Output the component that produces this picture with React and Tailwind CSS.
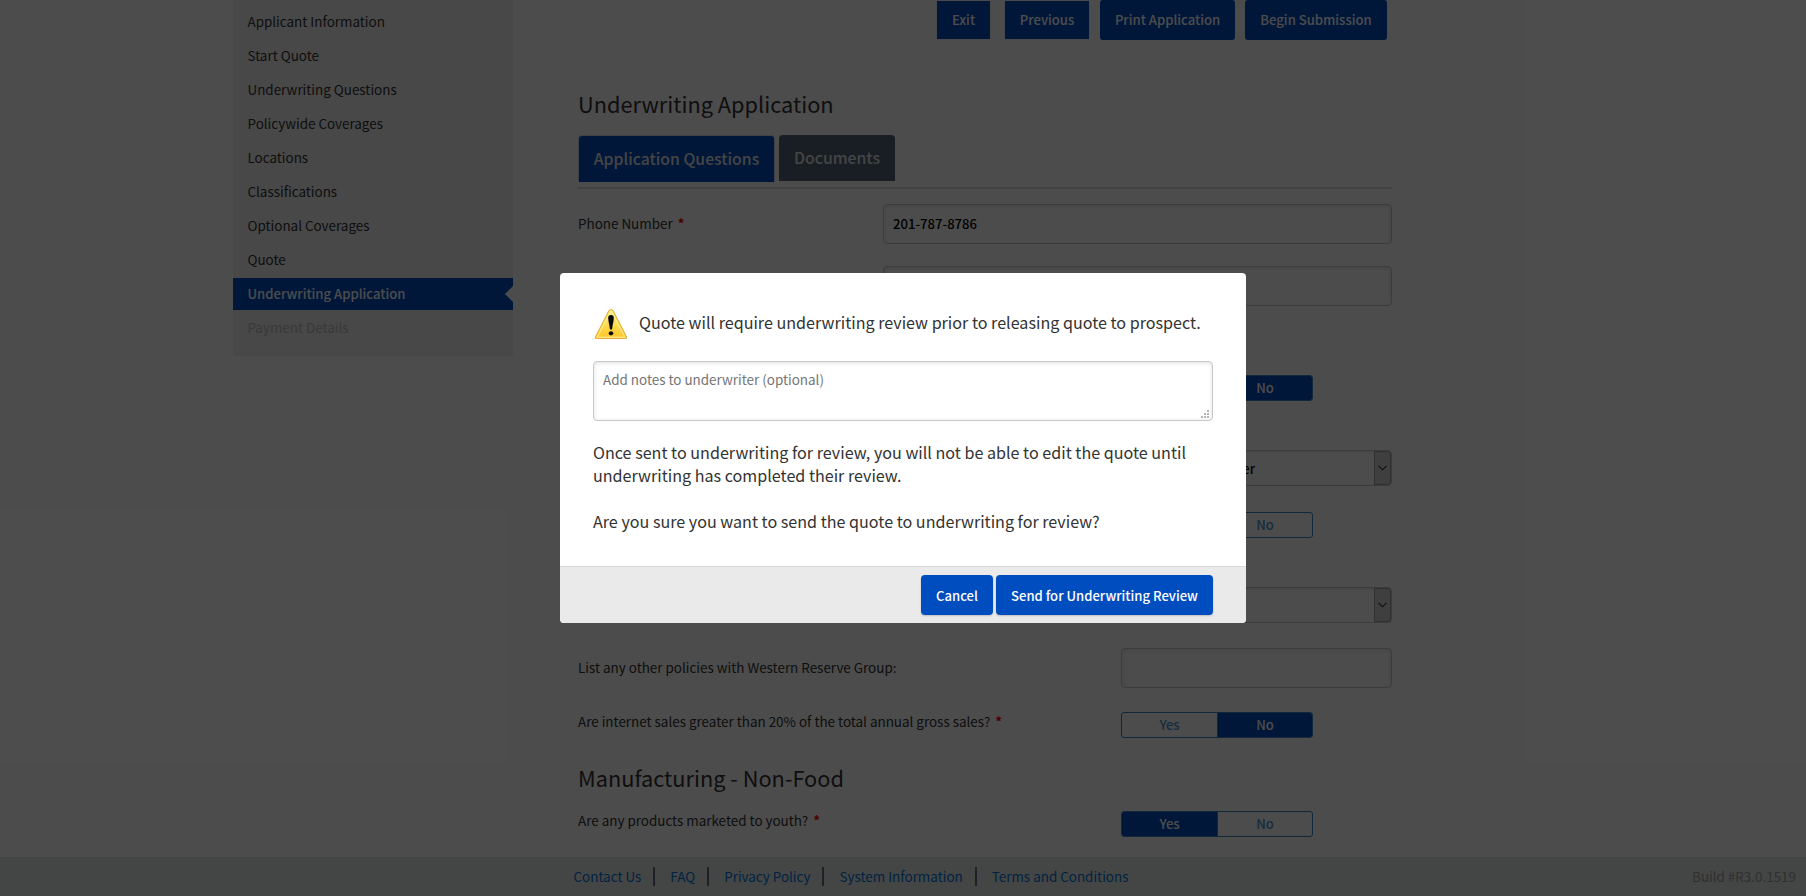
import clsx from "clsx";

const NAV_ITEMS = [
  "Applicant Information",
  "Start Quote",
  "Underwriting Questions",
  "Policywide Coverages",
  "Locations",
  "Classifications",
  "Optional Coverages",
  "Quote",
  "Underwriting Application",
  "Payment Details",
];

const FOOTER_LINKS = [
  "Contact Us",
  "FAQ",
  "Privacy Policy",
  "System Information",
  "Terms and Conditions",
];

function Sidebar() {
  return (
    <nav className="ml-[233px] h-[356px] w-[280px] shrink-0 bg-[#f1f1f1] pt-1.5">
      <ul className="flex flex-col gap-0.5">
        {NAV_ITEMS.map((item) => {
          const active = item === "Underwriting Application";
          return (
            <li
              key={item}
              className={clsx(
                "flex h-8 items-center justify-between pl-[14.5px]",
                active ? "bg-[#004dbf] text-[13.08px] font-medium" : "pb-0.5",
                item === "Payment Details" ? "text-[#bdbdbd]" : "text-[#333333]"
              )}
            >
              <span className={active ? "text-white" : undefined}>{item}</span>
              {active && (
                <svg className="h-4 w-2" viewBox="0 0 8 16">
                  <path d="M8 0 0 8l8 8z" fill="#fff" />
                </svg>
              )}
            </li>
          );
        })}
      </ul>
    </nav>
  );
}

function ActionButton({ children, className }) {
  return (
    <button
      className={clsx(
        "flex h-10 shrink-0 items-center justify-center whitespace-nowrap bg-[#004dbf] text-[13.08px] font-medium text-white",
        className
      )}
    >
      {children}
    </button>
  );
}

function Label({ children, required }) {
  return (
    <label className="text-[#333333]">
      {children}
      {required && <span className="ml-[5px] font-bold text-[#ff0000]">*</span>}
    </label>
  );
}

function Row({ children, className }) {
  return <div className={clsx("flex justify-between", className)}>{children}</div>;
}

function TextField({ value, className }) {
  return (
    <div
      className={clsx(
        "flex h-10 items-center rounded border border-[#c8c8c8] bg-white px-[9px] text-[13.1px] font-medium text-black shadow-[inset_0_1px_4px_rgba(0,0,0,0.12)]",
        className
      )}
    >
      {value}
    </div>
  );
}

function Toggle({ value, className }) {
  return (
    <div
      className={clsx(
        "mr-[79px] flex h-[26px] w-48 overflow-hidden rounded-[3px] border border-[#3a86c6] text-[13.05px] font-medium text-[#4f93ce]",
        className
      )}
    >
      {["Yes", "No"].map((option) => (
        <span
          key={option}
          className={clsx(
            "flex items-center justify-center",
            option === "Yes" ? "w-24 border-r border-[#3a86c6]" : "grow",
            option === value && "bg-[#004dbf]"
          )}
        >
          <span className={option === value ? "text-white" : undefined}>{option}</span>
        </span>
      ))}
    </div>
  );
}

function Select({ value }) {
  return (
    <div className="flex h-9 w-[271px] justify-between rounded border border-[#c8c8c8] font-medium text-black shadow-[inset_0_1px_3px_rgba(0,0,0,0.1)]">
      <span className="flex w-[133px] items-center justify-end pt-0.5 text-[13.05px]">{value}</span>
      <span className="flex w-[17px] items-center justify-center rounded-r-[3px] border border-[#a0a0a0] bg-[#d2d2d2]">
        <svg className="h-[6px] w-[9px]" viewBox="0 0 9 6" fill="none">
          <path d="M.5 .8l4 4 4-4" stroke="#303030" strokeWidth="1.1" />
        </svg>
      </span>
    </div>
  );
}

function Content() {
  return (
    <main className="ml-[65px] w-[814px]">
      <div className="flex h-10 justify-end pr-[5px]">
        <ActionButton className="mr-[13px] w-[55px] border border-[#f4f4f4] pb-px">Exit</ActionButton>
        <ActionButton className="mr-2.5 w-[86px] border border-[#f4f4f4] pb-px">Previous</ActionButton>
        <ActionButton className="mr-2.5 w-[135px] rounded-[3px] pb-px">Print Application</ActionButton>
        <ActionButton className="w-[142px] rounded-[3px] pb-px">Begin Submission</ActionButton>
      </div>

      <h1 className="mt-12 h-8 text-[21.75px] leading-8 text-[#333333]">Underwriting Application</h1>

      <div className="mt-[15px] flex h-[54px] items-start gap-1 border-b-2 border-[#dcdcdc] text-[15.8px] font-medium text-[#e6e6e6]">
        <div className="flex h-[47px] w-[197px] items-center justify-center rounded-t border border-b-0 border-[#d0dcea] bg-[#004dbf]">
          Application Questions
        </div>
        <div className="flex h-[46px] w-[116px] items-center justify-center rounded-t bg-[#50647b]">
          Documents
        </div>
      </div>

      <Row className="mt-[15px] h-[62px] items-start">
        <span className="flex h-[38px] items-center">
          <Label required>Phone Number</Label>
        </span>
        <TextField value="201-787-8786" className="w-[509px]" />
      </Row>
      <Row className="h-[109px] items-start justify-end">
        <TextField className="w-[509px]" />
      </Row>
      <Row className="h-[75px] items-start justify-end">
        <Toggle value="No" />
      </Row>
      <Row className="h-[62px] items-start justify-end">
        <Select value="Owner" />
      </Row>
      <Row className="h-[75px] items-start justify-end">
        <Toggle />
      </Row>
      <Row className="h-[61px] items-start justify-end">
        <Select />
      </Row>
      <Row className="h-16 items-start">
        <span className="flex h-[38px] items-center">
          <Label>List any other policies with Western Reserve Group:</Label>
        </span>
        <TextField className="w-[271px]" />
      </Row>
      <Row className="h-[26px]">
        <span className="flex h-[18px] items-center">
          <Label required>Are internet sales greater than 20% of the total annual gross sales?</Label>
        </span>
        <Toggle value="No" />
      </Row>
      <h2 className="mt-6 h-[49px] text-[21.75px] leading-8 text-[#333333]">Manufacturing - Non-Food</h2>
      <Row className="h-[26px]">
        <span className="flex h-[18px] items-center">
          <Label required>Are any products marketed to youth?</Label>
        </span>
        <Toggle value="Yes" />
      </Row>
    </main>
  );
}

function Footer() {
  return (
    <footer className="flex h-[39px] shrink-0 items-center bg-[#e5eae6] pb-0.5 pl-[573.5px] pr-[10px] text-[#0074dd]">
      {FOOTER_LINKS.map((link, i) => (
        <span key={link} className="flex items-center">
          {i > 0 && <span className="mr-[15px] ml-3 h-[19px] w-0.5 translate-y-px bg-[#686b85]" />}
          <a>{link}</a>
        </span>
      ))}
      <span className="ml-auto text-[#a0a0a0]">Build #R3.0.1519</span>
    </footer>
  );
}

function WarningIcon() {
  return (
    <svg className="h-[30px] w-8 shrink-0" viewBox="0 0 32 30">
      <defs>
        <linearGradient id="warn" x1="0" y1="0" x2="0" y2="1">
          <stop offset="0" stopColor="#fdf08a" />
          <stop offset="0.5" stopColor="#ffdc4e" />
          <stop offset="1" stopColor="#fcc52a" />
        </linearGradient>
      </defs>
      <path d="M14 1.500Q16-.6 18 1.500L31.600 28Q31.800 29.600 30.500 29.600H1.500Q.2 29.600.4 28Z" fill="url(#warn)" stroke="#e0a020" strokeWidth=".9" strokeLinejoin="round" />
      <path d="M16 2.200 2 28.200H30Z" fill="none" stroke="#fff0a0" strokeWidth="1" strokeLinejoin="round" />
      <path d="M16 6c1.900 0 2.900 1.200 2.800 3.200-.1 3.800-1.300 6-1.600 10.300-.1 1.600-2.300 1.600-2.400 0C14.500 15.200 13.300 13 13.200 9.200 13.100 7.200 14.100 6 16 6Z" fill="#0a0a0a" />
      <ellipse cx="16" cy="24.300" rx="2.300" ry="2.100" fill="#0a0a0a" />
    </svg>
  );
}

function Modal() {
  return (
    <div role="dialog" className="absolute top-[273px] left-[560px] flex h-[350px] w-[686px] flex-col overflow-hidden rounded-sm bg-white text-[#333333]">
      <div className="flex grow flex-col px-[33px] text-[16.13px] leading-[23px]">
        <div className="mt-9 flex h-[30px] items-center gap-3 pl-0.5">
          <WarningIcon />
          <p className="-mt-1 whitespace-nowrap">Quote will require underwriting review prior to releasing quote to prospect.</p>
        </div>
        <div className="mt-[22px] flex h-[60px] justify-between rounded border border-[#c8c8c8] pt-[7px] pr-[3px] pb-0.5 pl-[9px] text-[13.43px] leading-5 text-[#757575] shadow-[inset_0_1px_4px_rgba(0,0,0,0.13)]">
          <span>Add notes to underwriter (optional)</span>
          <svg className="h-2 w-2 self-end" viewBox="0 0 8 8" fill="#b4b4b4">
            <path d="M6 0h2v2H6zM3 3h2v2H3zM6 3h2v2H6zM0 6h2v2H0zM3 6h2v2H3zM6 6h2v2H6z" />
          </svg>
        </div>
        <p className="mt-5">
          Once sent to underwriting for review, you will not be able to edit the quote until
          <br />
          underwriting has completed their review.
        </p>
        <p className="mt-[23px]">Are you sure you want to send the quote to underwriting for review?</p>
      </div>
      <div className="flex h-[57px] shrink-0 justify-end gap-[3px] border-t border-[#d8d8d8] bg-[#eaeaea] pt-2 pr-[33px]">
        <ActionButton className="w-[72px] rounded-sm pt-px shadow-[0_1px_2px_rgba(0,0,0,0.2)]">Cancel</ActionButton>
        <ActionButton className="w-[217px] rounded-sm pt-px shadow-[0_1px_2px_rgba(0,0,0,0.2)]">Send for Underwriting Review</ActionButton>
      </div>
    </div>
  );
}

export default function App() {
  return (
    <div className="relative flex h-[896px] w-[1806px] flex-col overflow-hidden bg-white font-['Noto_Sans_CJK_SC','Noto_Sans',sans-serif] text-[13.43px] leading-5">
      <div className="flex h-[857px] shrink-0">
        <Sidebar />
        <Content />
      </div>
      <Footer />
      <div className="absolute inset-0 bg-black/70" />
      <Modal />
    </div>
  );
}
